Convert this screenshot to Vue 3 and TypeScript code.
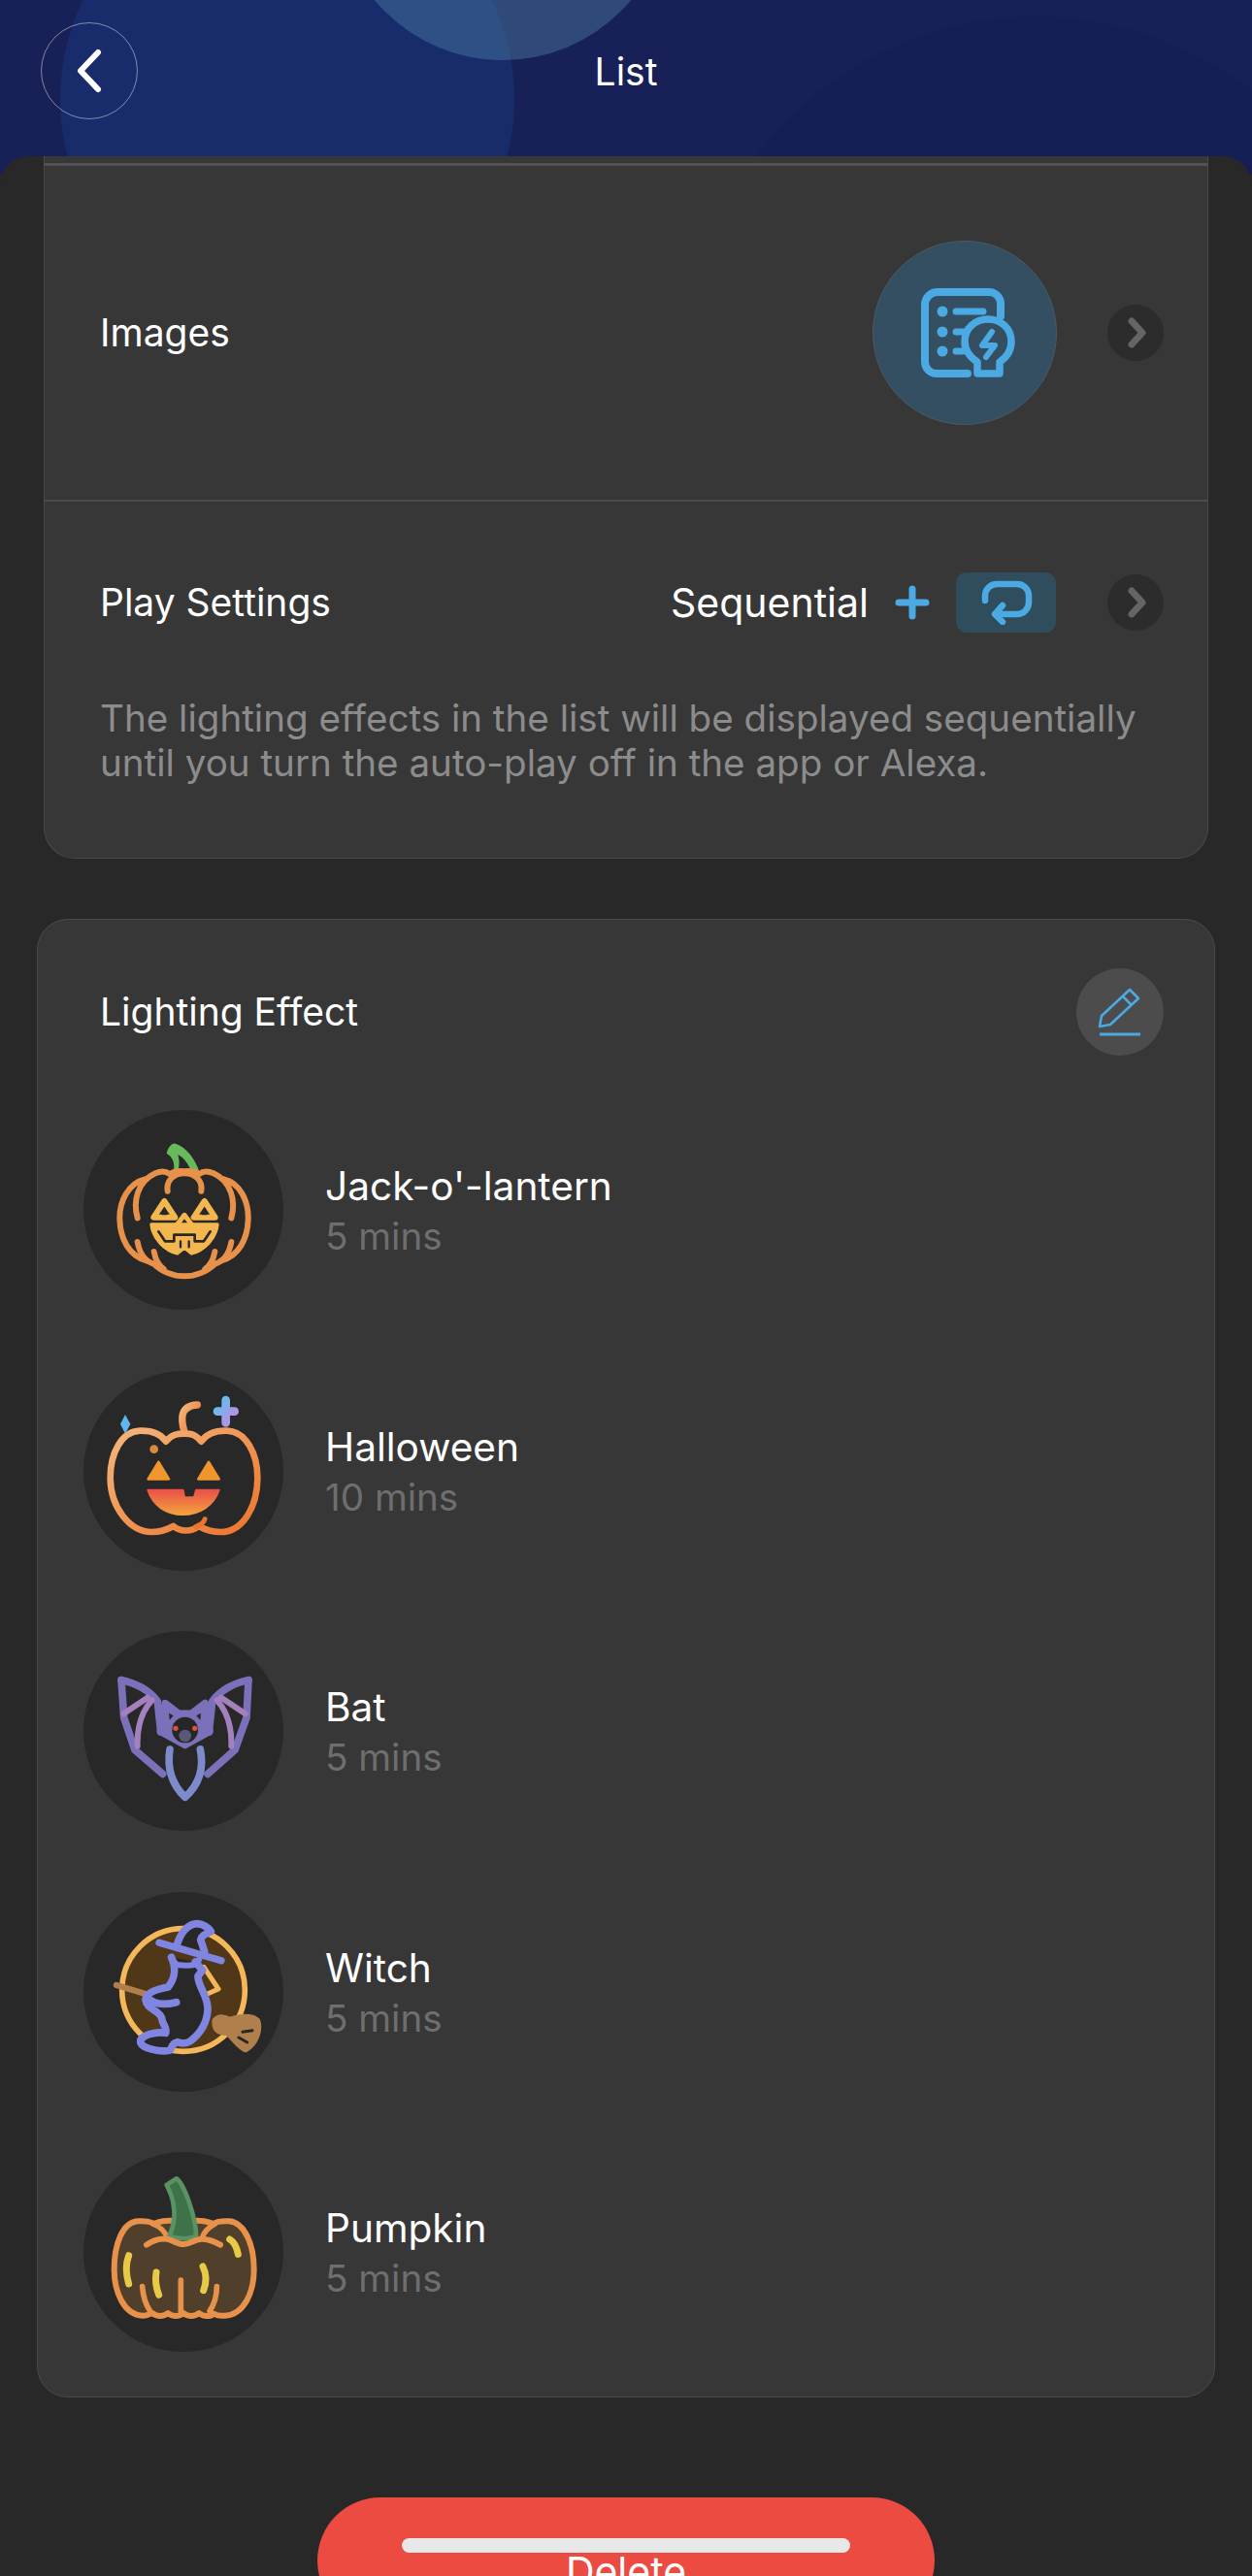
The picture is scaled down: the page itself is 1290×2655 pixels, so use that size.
<script setup lang="ts">
interface Effect { id: string; name: string; time: string; box: string }
const effects: Effect[] = [
  { id: 'jack', name: "Jack-o'-lantern", time: '5 mins', box: '48 44 618 618' },
  { id: 'halloween', name: 'Halloween', time: '10 mins', box: '48 40 618 618' },
  { id: 'bat', name: 'Bat', time: '5 mins', box: '48 36 618 618' },
  { id: 'witch', name: 'Witch', time: '5 mins', box: '48 30 618 618' },
  { id: 'pumpkin', name: 'Pumpkin', time: '5 mins', box: '48 40 618 618' },
]
</script>

<template>
  <div class="page">
    <header class="header">
      <div class="blob blob-big"></div>
      <div class="blob blob-right"></div>
      <div class="blob blob-top"></div>
      <button class="back" aria-label="Back">
        <svg width="30" height="46" viewBox="0 0 30 46"><path d="M24 4 L6 23 L24 42" fill="none" stroke="#fff" stroke-width="6" stroke-linecap="round" stroke-linejoin="round" /></svg>
      </button>
      <h1 class="title">List</h1>
    </header>

    <main class="sheet">
      <section class="card settings">
        <div class="top-line"></div>
        <div class="row row-images">
          <span class="label">Images</span>
          <div class="row-end">
            <div class="img-circle">
              <svg width="110" height="105" viewBox="938 290 110 105" fill="none" stroke="#4BA9E3" stroke-linecap="round" stroke-linejoin="round">
                <path d="M1030 325V312a12 12 0 0 0-12-12H965a13 13 0 0 0-13 13v59a12 12 0 0 0 12 12h32" stroke-width="8" />
                <circle cx="970" cy="320" r="5.5" fill="#4BA9E3" stroke="none" />
                <circle cx="970" cy="341" r="5.5" fill="#4BA9E3" stroke="none" />
                <circle cx="970" cy="361" r="5.5" fill="#4BA9E3" stroke="none" />
                <path d="M984 320h28M984 341h9M984 361h7" stroke-width="7" />
                <path d="M1006 372c-9-6-13-14-13-21 0-14 11-23 24-23s24 9 24 23c0 7-3 15-12 21v12h-23z" stroke-width="7.5" />
                <path d="M1021 341l-10 14h13l-9 12" stroke-width="6" />
              </svg>
            </div>
            <span class="chev">
              <svg width="24" height="36" viewBox="0 0 24 36"><path d="M8 6l11 12L8 30" fill="none" stroke="#656565" stroke-width="7" stroke-linecap="round" stroke-linejoin="round" /></svg>
            </span>
          </div>
        </div>
        <div class="divider"></div>
        <div class="row row-play">
          <span class="label">Play Settings</span>
          <div class="row-end">
            <span class="mode">Sequential</span>
            <svg class="plus" width="36" height="36" viewBox="0 0 36 36"><path d="M18 4v28M4 18h28" stroke="#4BA9E3" stroke-width="7" stroke-linecap="round" /></svg>
            <div class="loop">
              <svg width="54" height="46" viewBox="1010 602 54 46" fill="none" stroke="#4BA9E3" stroke-width="6.5" stroke-linecap="round" stroke-linejoin="round">
                <path d="M1015 623v-5a12 12 0 0 1 12-12h21a12 12 0 0 1 12 12v7a12 12 0 0 1-12 12h-22" />
                <path d="M1033 628l-8 9 8 8" />
              </svg>
            </div>
            <span class="chev">
              <svg width="24" height="36" viewBox="0 0 24 36"><path d="M8 6l11 12L8 30" fill="none" stroke="#656565" stroke-width="7" stroke-linecap="round" stroke-linejoin="round" /></svg>
            </span>
          </div>
        </div>
        <p class="desc">The lighting effects in the list will be displayed sequentially until you turn the auto-play off in the app or Alexa.</p>
      </section>

      <section class="card effects">
        <div class="effects-head">
          <span class="label">Lighting Effect</span>
          <button class="edit" aria-label="Edit">
            <svg width="46" height="52" viewBox="1132 1017 46 52" fill="none" stroke="#4BA9E3" stroke-linejoin="round">
              <path d="M1165 1020l9 9-29 27-11 2 2-11z" stroke-width="2.6" />
              <path d="M1158 1027l9 9" stroke-width="2.6" />
              <path d="M1134 1066h42" stroke-width="3.2" />
            </svg>
          </button>
        </div>

        <ul class="list">
          <li v-for="e in effects" :key="e.id" class="item">
            <div class="avatar">
              <svg width="206" height="206" :viewBox="e.box" fill="none" stroke-linecap="round" stroke-linejoin="round">
                <defs v-if="e.id === 'halloween'">
                  <linearGradient id="hw-line" x1="0" y1="0" x2="1" y2="1"><stop offset="0" stop-color="#F4B67C" /><stop offset="1" stop-color="#EC742C" /></linearGradient>
                  <linearGradient id="hw-mouth" x1="0" y1="0" x2="0" y2="1"><stop offset="0" stop-color="#EA5148" /><stop offset="1" stop-color="#F3A23C" /></linearGradient>
                  <linearGradient id="hw-plus" x1="0" y1="0" x2="1" y2="1"><stop offset="0" stop-color="#58C4F0" /><stop offset="1" stop-color="#C987E4" /></linearGradient>
                </defs>

                <g v-if="e.id === 'jack'">
                  <path d="M305 178C310 160 320 146 332 148C368 160 392 195 406 234H382C372 212 360 192 340 182C345 197 345 215 340 234H326C332 212 325 190 305 178Z" fill="#68B95B" />
                  <g stroke="#E8914B" stroke-width="18">
                    <path d="M308 295c-5-32 18-55 52-55s57 23 52 55" />
                    <path d="M215 378c-14-50-2-112 55-138 18-8 34-6 44 2 14-8 34-10 46-8 14-2 32 0 46 8 10-8 26-10 44-2 57 26 69 88 55 138" />
                    <path d="M238 258c-50 12-80 68-78 125 2 60 28 112 85 128" />
                    <path d="M482 258c50 12 77 68 75 125-2 60-28 112-85 128" />
                    <path d="M215 452c6 34 24 60 50 68 30 28 62 38 95 38s65-10 95-38c26-8 44-34 50-68" />
                    <path d="M266 482c4 24 14 42 30 54M454 482c-4 24-14 42-30 54" />
                  </g>
                  <path d="M298 326l-33 50h66z" stroke="#F4B750" stroke-width="18" />
                  <path d="M422 326l-33 50h66z" stroke="#F4B750" stroke-width="18" />
                  <path d="M298 354l-9 15h18z" fill="#282828" />
                  <path d="M422 354l-9 15h18z" fill="#282828" />
                  <path d="M360 369l-24 31h48z" stroke="#F4B750" stroke-width="15" />
                  <path d="M258 398H332L346 412H374L388 398H462C458 442 420 478 382 488L360 470L338 488C300 478 262 442 258 398Z" fill="#F4B750" stroke="#F4B750" stroke-width="10" />
                  <path d="M280 420L300 450H328V430H392V450H420L440 420" stroke="#282828" stroke-width="8" />
                  <path d="M348 450v18M374 450v18" stroke="#282828" stroke-width="7" />
                </g>

                <g v-else-if="e.id === 'halloween'">
                  <path d="M360 228c-12-40-14-80 40-83" stroke="url(#hw-line)" stroke-width="22" />
                  <path d="M303 258C287 234 259 224 223 225C165 227 131 295 131 370C131 460 190 538 260 538C286 538 304 532 326 520C348 538 382 538 404 520C426 532 446 538 472 538C540 538 586 460 586 370C586 295 550 227 492 225C456 224 428 234 412 258C394 236 382 234 360 234C338 234 321 236 303 258Z" stroke="url(#hw-line)" stroke-width="20" />
                  <path d="M423 498c-2 10-14 18-28 24" stroke="#EC742C" stroke-width="15" />
                  <circle cx="266" cy="282" r="13" fill="#D78B3E" />
                  <path d="M280 322l-32 52h64z" fill="#F0962D" stroke="#F0962D" stroke-width="8" />
                  <path d="M435 322l-32 52h64z" fill="#F0962D" stroke="#F0962D" stroke-width="8" />
                  <path d="M247 408h109l4 23h30l6-23h71c-16 48-60 76-112 76s-92-28-108-76z" fill="url(#hw-mouth)" stroke="url(#hw-mouth)" stroke-width="6" />
                  <path d="M177 175l16 29-16 30-15-30z" fill="#5FB5EC" />
                  <path d="M488 130v70M462 165h53" stroke="url(#hw-plus)" stroke-width="26" />
                </g>

                <g v-else-if="e.id === 'bat'">
                  <g stroke="#7B70BA" stroke-width="23">
                    <path d="M165 188c44 8 88 32 112 66l10 94" />
                    <path d="M165 188l8 116 34 100 86 74" />
                    <path d="M558 188c-44 8-88 32-112 66l-10 94" />
                    <path d="M558 188l-6 116-36 100-84 74" />
                    <path d="M301 260l41 32h40l42-32c6 30 6 60 14 86l-76 42-76-42c10-26 10-56 15-86z" fill="#7B70BA" />
                  </g>
                  <g stroke="#A580BE" stroke-width="18">
                    <path d="M172 292l74-50M215 392c-2-56 12-106 45-142" />
                    <path d="M548 292l-74-50M505 392c2-56-12-106-45-142" />
                  </g>
                  <path d="M312 290l14 8-12 14zM411 290l-14 8 12 14z" fill="#282828" />
                  <circle cx="362" cy="342" r="40" fill="#262626" />
                  <circle cx="333" cy="337" r="8" fill="#E0503A" />
                  <circle cx="392" cy="337" r="8" fill="#E0503A" />
                  <circle cx="362" cy="360" r="19" fill="#5A5779" />
                  <path d="M315 402c-10 62 10 112 47 148 40-36 60-86 47-148" stroke="#7D8ACB" stroke-width="23" />
                </g>

                <g v-else-if="e.id === 'witch'">
                  <circle cx="357" cy="333" r="190" fill="#4F3717" stroke="#F4B75A" stroke-width="17" />
                  <path d="M420 262l45 68-32 14" stroke="#F4B75A" stroke-width="15" />
                  <path d="M150 318l92 28" stroke="#B07F4C" stroke-width="19" />
                  <path d="M450 425C465 405 490 415 500 420C530 410 570 405 590 425C600 450 590 500 550 522C530 520 505 480 490 470C465 470 445 460 450 425Z" fill="#B07F4C" stroke="#B07F4C" stroke-width="8" />
                  <path d="M540 463l30-5M528 480l26 15" stroke="#282828" stroke-width="9" />
                  <path d="M320 232c14 30 12 64-10 92-32 6-70 16-70 40 4 30 42 30 50 56 0 18 18 26 12 46-30-6-78 8-78 26 0 22 62 34 90 28 10-6 4-22 24-26 16 6 30 4 42-4 30-24 50-58 52-96 2-42-32-74-30-104l14-18-22-26" fill="#282828" stroke="#7F85E0" stroke-width="23" />
                  <path d="M245 355c18 22 50 26 90 16" stroke="#7F85E0" stroke-width="23" />
                  <path d="M338 190c10-30 30-60 60-62 18 0 36 12 44 24-16 6-30 14-32 26l12 36" fill="#282828" stroke="#7F85E0" stroke-width="23" />
                  <path d="M282 187l192 55" stroke="#7F85E0" stroke-width="22" />
                  <path d="M318 232c10 12 14 22 24 24 18 2 38 2 54-2l10-16" stroke="#7F85E0" stroke-width="18" />
                </g>

                <g v-else-if="e.id === 'pumpkin'">
                  <path d="M265 262C255 254 241 252 215 254C169 258 143 324 143 404C143 472 173 544 231 546C249 546 251 540 261 538C275 550 295 550 309 538C323 550 343 550 357 538C371 550 391 550 405 538C419 550 439 550 450 540C462 546 470 548 485 546C545 544 575 472 575 404C575 324 545 258 499 254C473 252 461 254 449 262C431 254 417 252 399 252H315C297 252 283 254 265 262Z" fill="#4F3F2B" stroke="#E8914B" stroke-width="18" />
                  <path d="M262 262c22 8 38 22 46 46M455 262c-20 10-34 24-42 46" stroke="#E8914B" stroke-width="16" />
                  <path d="M305 142l30-20c16 10 28 40 40 75 12 34 20 70 22 104-20 8-54 8-84 0 14-30 18-60 14-90-2-26-10-46-22-69z" fill="#3E7349" stroke="#5A9264" stroke-width="14" />
                  <path d="M243 327c22-16 46-20 64-18 14 2 30 16 50 16s38-16 56-16c18 0 38 6 58 18" stroke="#E8914B" stroke-width="18" />
                  <path d="M230 456c2 26 8 52 24 76M460 456c0 26-6 52-22 76M349 436v96" stroke="#E8914B" stroke-width="17" />
                  <path d="M188 360c-10 26-10 54 0 88M273 412c-4 24-2 44 8 70M417 394c10 20 12 48 2 74M500 310c14 8 22 26 26 46" stroke="#E8C948" stroke-width="21" />
                </g>
              </svg>
            </div>
            <div class="item-text">
              <span class="name">{{ e.name }}</span>
              <span class="time">{{ e.time }}</span>
            </div>
          </li>
        </ul>
      </section>

      <button class="delete">Delete</button>
    </main>
    <div class="home"></div>
  </div>
</template>

<style>
html, body { margin: 0; background: #282828; }
</style>

<style scoped>
.page {
  position: relative;
  width: 1290px;
  height: 2655px;
  overflow: hidden;
  background: #282828;
  font-family: Inter, "Liberation Sans", sans-serif;
  color: #fff;
}
.header {
  position: relative;
  height: 180px;
  margin-bottom: -19px;
  background: #182157;
  overflow: hidden;
  padding: 23px 42px 0;
  box-sizing: border-box;
}
.blob { position: absolute; border-radius: 50%; }
.blob-big { left: 62px; top: -132px; width: 468px; height: 468px; background: #182C6C; }
.blob-right { left: 707px; top: 17px; width: 720px; height: 720px; background: #161F55; }
.blob-top { left: 346px; top: -282px; width: 344px; height: 344px; background: rgba(82, 130, 170, 0.42); }
.back {
  position: relative;
  width: 100px;
  height: 100px;
  border: 1.5px solid rgba(255, 255, 255, 0.45);
  border-radius: 50%;
  background: transparent;
  padding: 0;
  display: flex;
  align-items: center;
  justify-content: center;
}
.title {
  position: absolute;
  left: 0;
  right: 0;
  top: 51px;
  margin: 0;
  text-align: center;
  font-size: 39px;
  line-height: 46px;
  font-weight: 400;
}
.sheet {
  position: relative;
  background: #282828;
  border-radius: 30px 30px 0 0;
  display: flex;
  flex-direction: column;
  align-items: center;
}
.card {
  background: #373737;
  box-sizing: border-box;
  border: 1.5px solid #4a4a4a;
}
.settings {
  width: 1200px;
  height: 724px;
  border-top: 0;
  border-radius: 0 0 32px 32px;
  padding-top: 7px;
}
.top-line { height: 3px; background: #525252; margin: 0 -1px; }
.row { display: flex; align-items: center; justify-content: space-between; padding: 0 45px 0 57px; }
.row-images { height: 344px; }
.row-play { height: 208px; }
.divider { height: 1.5px; background: #4a4a4a; }
.row-end { display: flex; align-items: center; }
.label { font-size: 39px; line-height: 46px; }
.img-circle {
  width: 190px;
  height: 190px;
  border-radius: 50%;
  background: #344E62;
  border: 1px solid #4b5a64;
  box-sizing: border-box;
  display: flex;
  align-items: center;
  justify-content: center;
  margin-right: 52px;
}
.chev {
  width: 58px;
  height: 58px;
  border-radius: 50%;
  background: #2C2C2C;
  display: flex;
  align-items: center;
  justify-content: center;
}
.mode { font-size: 41px; line-height: 50px; margin-right: 27px; }
.plus { margin-right: 27px; }
.loop {
  width: 103px;
  height: 62px;
  border-radius: 11px;
  background: #2F4D5C;
  display: flex;
  align-items: center;
  justify-content: center;
  margin-right: 53px;
}
.desc {
  margin: -8px 40px 0 57px;
  color: #8C8C8C;
  font-size: 38.6px;
  line-height: 46px;
}
.effects {
  width: 1214px;
  height: 1524px;
  margin-top: 62px;
  border-radius: 32px;
  padding: 50px 0 0;
}
.effects-head {
  display: flex;
  align-items: center;
  justify-content: space-between;
  padding: 0 52px 0 64px;
  height: 90px;
}
.edit {
  width: 90px;
  height: 90px;
  border: 0;
  border-radius: 50%;
  background: #4C4C4C;
  padding: 0;
  display: flex;
  align-items: center;
  justify-content: center;
}
.list {
  list-style: none;
  margin: 56px 0 0;
  padding: 0 0 0 47px;
  display: flex;
  flex-direction: column;
  gap: 62.5px;
}
.item { display: flex; align-items: center; gap: 43px; }
.avatar {
  width: 206px;
  height: 206px;
  border-radius: 50%;
  background: #282828;
  flex: none;
}
.avatar svg { display: block; }
.item-text { display: flex; flex-direction: column; padding-top: 2px; }
.name { font-size: 40.6px; line-height: 52px; }
.time { font-size: 38.6px; line-height: 50px; color: #6E6E6E; }
.delete {
  width: 636px;
  height: 130px;
  margin-top: 103px;
  flex: none;
  border: 0;
  border-radius: 65px;
  background: #EB4B40;
  color: #fff;
  font-family: inherit;
  font-size: 41px;
  padding: 22px 0 0;
}
.home {
  position: absolute;
  left: 414px;
  top: 2616px;
  width: 462px;
  height: 15px;
  border-radius: 8px;
  background: #E8E8E8;
}
</style>
